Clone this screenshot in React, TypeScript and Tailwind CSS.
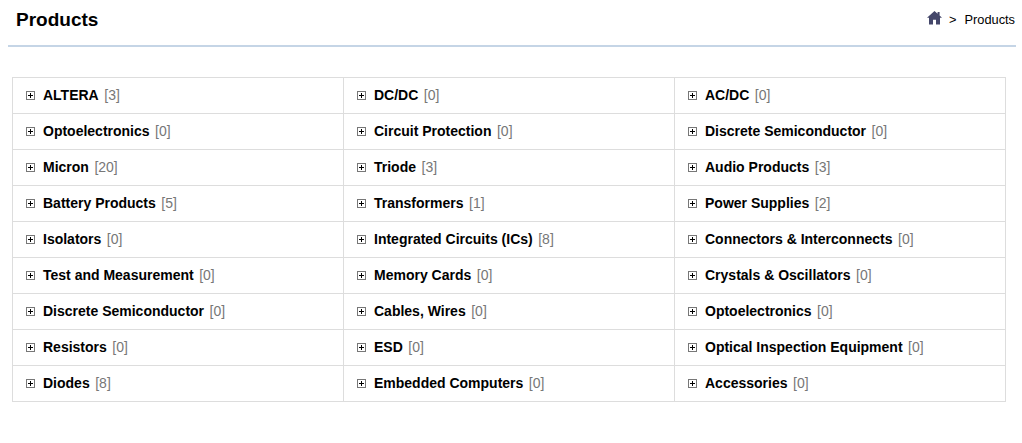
import React from 'react';

const ROWS: [string, number][][] = [
  [['ALTERA', 3], ['DC/DC', 0], ['AC/DC', 0]],
  [['Optoelectronics', 0], ['Circuit Protection', 0], ['Discrete Semiconductor', 0]],
  [['Micron', 20], ['Triode', 3], ['Audio Products', 3]],
  [['Battery Products', 5], ['Transformers', 1], ['Power Supplies', 2]],
  [['Isolators', 0], ['Integrated Circuits (ICs)', 8], ['Connectors & Interconnects', 0]],
  [['Test and Measurement', 0], ['Memory Cards', 0], ['Crystals & Oscillators', 0]],
  [['Discrete Semiconductor', 0], ['Cables, Wires', 0], ['Optoelectronics', 0]],
  [['Resistors', 0], ['ESD', 0], ['Optical Inspection Equipment', 0]],
  [['Diodes', 8], ['Embedded Computers', 0], ['Accessories', 0]],
];

const PlusBox = () => (
  <svg width="9" height="9" viewBox="0 0 9 9" className="shrink-0">
    <rect x="0.5" y="0.5" width="8" height="8" fill="#fff" stroke="#777" />
    <path d="M2 4.5H7M4.5 2V7" stroke="#000" />
  </svg>
);

const HomeIcon = () => (
  <svg width="15" height="14" viewBox="0 0 15 14" className="mb-[2px]">
    <path d="M7.5 0L0 6.8H2V13.5H6V8.8H9V13.5H13V6.8H15L12.6 4.6V1H10.6V2.8Z" fill="#44476a" />
  </svg>
);

export default function App() {
  return (
    <div className="min-h-[443px] bg-white pl-2 pr-[6px] font-['Liberation_Sans',Arial,sans-serif] text-black">
      <div className="flex h-[47px] items-center justify-between border-b-2 border-[#c5d5e6] pb-[7px] pl-2">
        <h1 className="mt-[2px] text-[19px] font-bold leading-[22px]">Products</h1>
        <div className="flex items-center text-[12.8px] leading-[16px]">
          <HomeIcon />
          <span className="ml-[7px] mt-[2px]">&gt;</span>
          <span className="ml-[8px] mr-px mt-[2px]">Products</span>
        </div>
      </div>

      <div className="ml-1 mt-[30px] grid w-[994px] grid-cols-[331px_331px_331px] border-l border-t border-[#dddddd]">
        {ROWS.flat().map(([name, count], i) => (
          <div key={i} className="flex h-9 items-center border-b border-r border-[#dddddd] pl-[13px]">
            <PlusBox />
            <span className="mb-[2px] ml-[8px] text-[14px] font-bold leading-[20px]">{name}</span>
            <span className="mb-[2px] ml-[5.5px] text-[14px] leading-[20px] text-[#777777]">[{count}]</span>
          </div>
        ))}
      </div>
    </div>
  );
}
